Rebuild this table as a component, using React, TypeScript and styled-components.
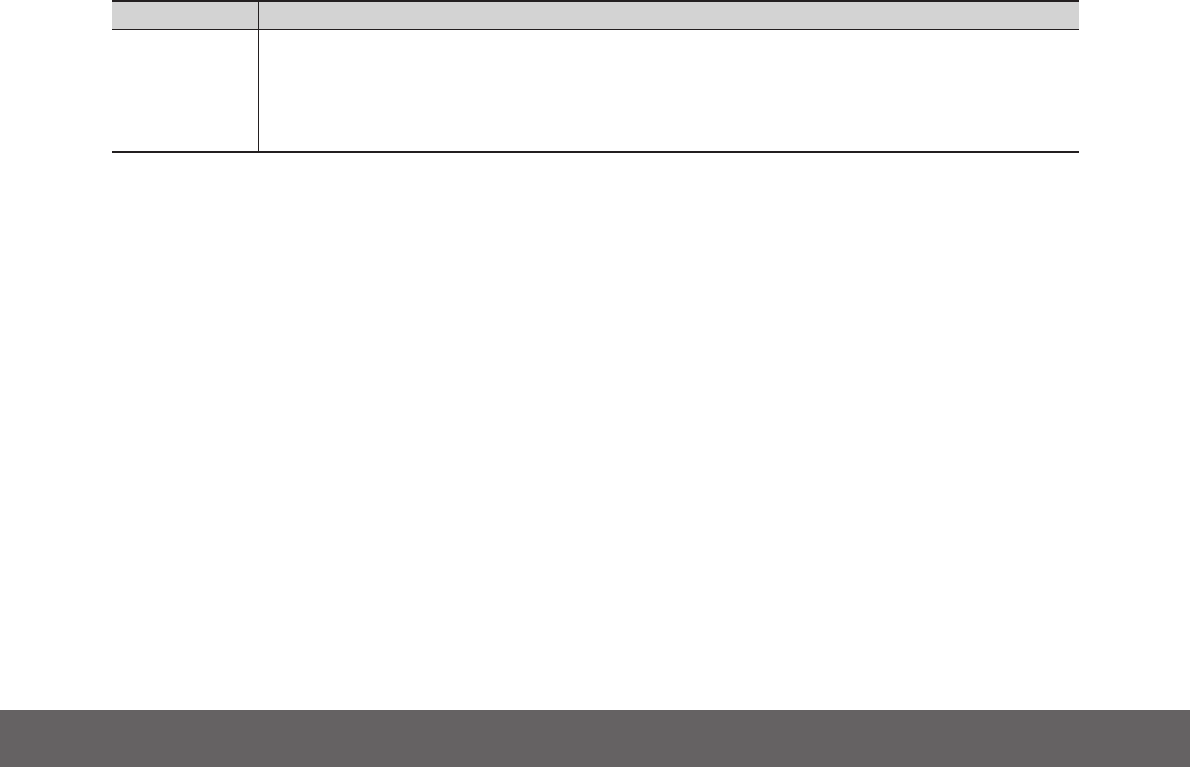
import { FC } from 'react';
import { styled, createGlobalStyle } from 'styled-components';

const GlobalStyle = createGlobalStyle`
  html, body {
    margin: 0;
    padding: 0;
    background: #ffffff;
    font-family: 'Liberation Sans', Arial, sans-serif;
  }
`;

const App: FC = () => {
  return (
    <>
      <GlobalStyle />
      <Page>
        <Table>
          <thead>
            <tr>
              <HeadCell $first />
              <HeadCell />
            </tr>
          </thead>
          <tbody>
            <tr>
              <BodyCell $first />
              <BodyCell />
            </tr>
          </tbody>
        </Table>
        <Footer />
      </Page>
    </>
  );
};

export default App;

const Page = styled.div`
  display: flex;
  flex-direction: column;
  min-height: 767px;
`;

const Table = styled.table`
  margin-left: 112px;
  width: 967px;
  border-collapse: collapse;
  table-layout: fixed;
  border-top: 2px solid #231f20;
  border-bottom: 2px solid #231f20;
`;

const HeadCell = styled.th<{ $first?: boolean }>`
  height: 27px;
  padding: 0;
  background: #d3d3d3;
  border-bottom: 1px solid #231f20;
  width: ${({ $first }) => ($first ? '146px' : 'auto')};
  border-right: ${({ $first }) => ($first ? '1px solid #231f20' : 'none')};
`;

const BodyCell = styled.td<{ $first?: boolean }>`
  height: 121px;
  padding: 0;
  border-right: ${({ $first }) => ($first ? '1px solid #231f20' : 'none')};
`;

const Footer = styled.div`
  margin-top: auto;
  width: 1190px;
  height: 57px;
  background: #656263;
`;
